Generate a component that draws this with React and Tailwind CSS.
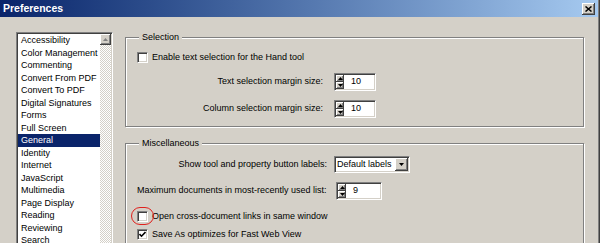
const categories = [
  "Accessibility",
  "Color Management",
  "Commenting",
  "Convert From PDF",
  "Convert To PDF",
  "Digital Signatures",
  "Forms",
  "Full Screen",
  "General",
  "Identity",
  "Internet",
  "JavaScript",
  "Multimedia",
  "Page Display",
  "Reading",
  "Reviewing",
  "Search",
  "Security",
  "Spelling",
  "Startup",
]

// classic 3d edges
const raised = "bg-[#d4d0c8] shadow-[inset_-1px_-1px_0_#404040,inset_1px_1px_0_#ffffff,inset_-2px_-2px_0_#808080]"
const sunken = "border border-[#808080] border-r-white border-b-white shadow-[inset_1px_1px_0_#404040,inset_-1px_-1px_0_#d4d0c8]"

function Arrow({ down = false, color = "#000" }) {
  return (
    <svg width="5" height="3" viewBox="0 0 5 3">
      {down ? <polygon points="0,0 5,0 2.5,3" fill={color} /> : <polygon points="0,3 5,3 2.5,0" fill={color} />}
    </svg>
  )
}

function Checkbox({ checked = false }) {
  return (
    <div className={`w-[11px] h-[11px] bg-white flex items-center justify-center ${sunken}`}>
      {checked && (
        <svg width="7" height="7" viewBox="0 0 7 7">
          <polyline points="0.5,3 2.5,5.2 6.5,1" fill="none" stroke="#000" strokeWidth="1.6" />
        </svg>
      )}
    </div>
  )
}

function Spin({ value, width }) {
  return (
    <div className={`h-[18px] flex bg-white ${width} ${sunken}`}>
      <div className="w-[9px] flex flex-col p-[1px] pr-0">
        <div className={`flex-1 flex items-center justify-center ${raised}`}>
          <Arrow />
        </div>
        <div className={`flex-1 flex items-center justify-center ${raised}`}>
          <Arrow down />
        </div>
      </div>
      <div className="flex-1 flex items-center pl-[7px]">{value}</div>
    </div>
  )
}

function Dropdown({ value }) {
  return (
    <div className={`w-[76px] h-[17px] flex bg-white ${sunken}`}>
      <div className="flex-1 flex items-center pl-[2px] whitespace-nowrap">{value}</div>
      <div className="p-[1px] pl-0 flex">
        <div className={`w-[13px] flex items-center justify-center ${raised}`}>
          <Arrow down />
        </div>
      </div>
    </div>
  )
}

function App() {
  return (
    <div className="w-[600px] h-[243px] overflow-hidden bg-[#d4d0c8] flex flex-col text-[9px] text-black font-['Liberation_Sans',Arial,sans-serif] shadow-[inset_-1px_0_0_#404040,inset_-2px_0_0_#808080]">

      {/* Title bar */}
      <div className="h-[17px] mr-[2px] shrink-0 flex items-center justify-between pl-[3px] pr-[3px] bg-linear-to-r from-[#0a246a] to-[#a6caf0]">
        <span className="text-white font-bold text-[10.5px]">Preferences</span>
        <div className={`w-[13px] h-[12px] flex items-center justify-center ${raised}`}>
          <svg width="7" height="6" viewBox="0 0 7 6">
            <path d="M0.5 0.5 L6.5 5.5 M6.5 0.5 L0.5 5.5" stroke="#000" strokeWidth="1.5" />
          </svg>
        </div>
      </div>

      <div className="flex items-start pl-[16px]">

        {/* Category list */}
        <div className={`mt-[15px] w-[97px] h-[260px] shrink-0 flex bg-white ${sunken} p-[1px]`}>
          <div className="flex-1 overflow-hidden">
            {categories.map((name) => (
              <div
                key={name}
                className={`h-[12.5px] leading-[12.5px] pl-[3px] whitespace-nowrap ${name === "General" ? "bg-[#0a246a] text-white" : ""}`}
              >
                {name}
              </div>
            ))}
          </div>
          <div className="w-[11px] flex flex-col bg-[image:repeating-conic-gradient(#ffffff_0_25%,#d4d0c8_0_50%)] bg-[length:2px_2px]">
            <div className={`h-[11px] flex items-center justify-center ${raised}`}>
              <Arrow color="#808080" />
            </div>
          </div>
        </div>

        {/* Settings */}
        <div className="ml-[12px] mt-[14px] w-[459px] flex flex-col">

          <fieldset className="border border-[#808080] shadow-[inset_1px_1px_0_#ffffff,1px_1px_0_#ffffff] px-[11px] pb-[8px]">
            <legend className="ml-[2px] px-[3px] leading-[12px] bg-[#d4d0c8]">Selection</legend>

            <div className="mt-[9px] h-[11px] flex items-center">
              <Checkbox />
              <span className="ml-[4px] whitespace-nowrap">Enable text selection for the Hand tool</span>
            </div>

            <div className="mt-[10px] flex items-center">
              <span className="w-[186px] text-right whitespace-nowrap">Text selection margin size:</span>
              <div className="ml-[11px]">
                <Spin value="10" width="w-[42px]" />
              </div>
            </div>

            <div className="mt-[9px] flex items-center">
              <span className="w-[186px] text-right whitespace-nowrap">Column selection margin size:</span>
              <div className="ml-[11px]">
                <Spin value="10" width="w-[42px]" />
              </div>
            </div>
          </fieldset>

          <fieldset className="mt-[10px] border border-[#808080] shadow-[inset_1px_1px_0_#ffffff,1px_1px_0_#ffffff] px-[11px] pb-[20px]">
            <legend className="ml-[2px] px-[3px] leading-[12px] bg-[#d4d0c8]">Miscellaneous</legend>

            <div className="mt-[7px] flex items-center">
              <span className="w-[190px] text-right whitespace-nowrap">Show tool and property button labels:</span>
              <div className="ml-[7px]">
                <Dropdown value="Default labels" />
              </div>
            </div>

            <div className="mt-[9px] flex items-center">
              <span className="w-[188px] text-right whitespace-nowrap">Maximum documents in most-recently used list:</span>
              <div className="ml-[11px]">
                <Spin value="9" width="w-[46px]" />
              </div>
            </div>

            <div className="mt-[11px] h-[11px] flex items-center">
              <div className="relative">
                <Checkbox />
                <div className="absolute left-[-6px] top-[-4px] w-[23px] h-[18px] rounded-full border-[1.5px] border-[#e0201c]"></div>
              </div>
              <span className="ml-[4px] whitespace-nowrap">Open cross-document links in same window</span>
            </div>

            <div className="mt-[7px] h-[11px] flex items-center">
              <Checkbox checked />
              <span className="ml-[4px] whitespace-nowrap">Save As optimizes for Fast Web View</span>
            </div>
          </fieldset>

        </div>
      </div>
    </div>
  )
}

export default App
